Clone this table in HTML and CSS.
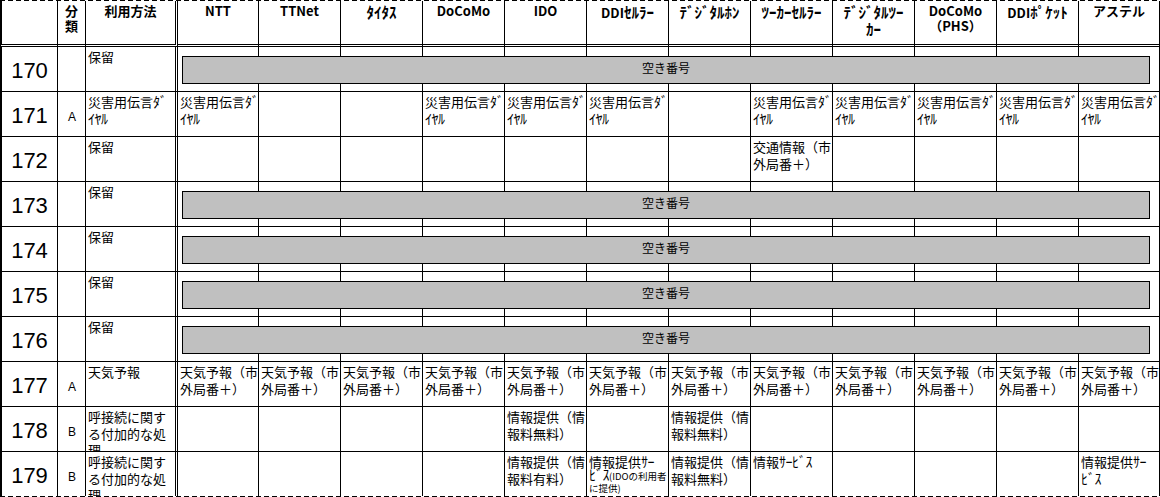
FILE: index.html
```html
<!DOCTYPE html>
<html lang="ja">
<head>
<meta charset="utf-8">
<title>番号利用表</title>
<link rel="stylesheet" href="styles.css">
</head>
<body>
<div class="sheet">
  <div class="row head">
    <div class="c"></div>
    <div class="c">分<br>類</div>
    <div class="c">利用方法</div>
    <div class="c">NTT</div>
    <div class="c">TTNet</div>
    <div class="c"><span class="hw">ﾀｲﾀｽ</span></div>
    <div class="c">DoCoMo</div>
    <div class="c">IDO</div>
    <div class="c">DDI<span class="hw">ｾﾙﾗｰ</span></div>
    <div class="c"><span class="hw">ﾃﾞｼﾞﾀﾙﾎﾝ</span></div>
    <div class="c"><span class="hw">ﾂｰｶｰｾﾙﾗｰ</span></div>
    <div class="c"><span class="hw">ﾃﾞｼﾞﾀﾙﾂｰ</span><br><span class="hw">ｶｰ</span></div>
    <div class="c">DoCoMo<br>（PHS）</div>
    <div class="c">DDI<span class="hw">ﾎﾟｹｯﾄ</span></div>
    <div class="c">アステル</div>
  </div>

  <div class="row">
    <div class="c num">170</div><div class="c cat"></div><div class="c">保留</div>
    <div class="c"></div><div class="c"></div><div class="c"></div><div class="c"></div><div class="c"></div><div class="c"></div>
    <div class="c"></div><div class="c"></div><div class="c"></div><div class="c"></div><div class="c"></div><div class="c"></div>
    <div class="bar">空き番号</div>
  </div>

  <div class="row">
    <div class="c num">171</div><div class="c cat">A</div><div class="c">災害用伝言<span class="hw">ﾀﾞ</span><br><span class="hw">ｲﾔﾙ</span></div>
    <div class="c">災害用伝言<span class="hw">ﾀﾞ</span><br><span class="hw">ｲﾔﾙ</span></div><div class="c"></div><div class="c"></div>
    <div class="c">災害用伝言<span class="hw">ﾀﾞ</span><br><span class="hw">ｲﾔﾙ</span></div><div class="c">災害用伝言<span class="hw">ﾀﾞ</span><br><span class="hw">ｲﾔﾙ</span></div><div class="c">災害用伝言<span class="hw">ﾀﾞ</span><br><span class="hw">ｲﾔﾙ</span></div>
    <div class="c"></div><div class="c">災害用伝言<span class="hw">ﾀﾞ</span><br><span class="hw">ｲﾔﾙ</span></div><div class="c">災害用伝言<span class="hw">ﾀﾞ</span><br><span class="hw">ｲﾔﾙ</span></div>
    <div class="c">災害用伝言<span class="hw">ﾀﾞ</span><br><span class="hw">ｲﾔﾙ</span></div><div class="c">災害用伝言<span class="hw">ﾀﾞ</span><br><span class="hw">ｲﾔﾙ</span></div><div class="c">災害用伝言<span class="hw">ﾀﾞ</span><br><span class="hw">ｲﾔﾙ</span></div>
  </div>

  <div class="row">
    <div class="c num">172</div><div class="c cat"></div><div class="c">保留</div>
    <div class="c"></div><div class="c"></div><div class="c"></div><div class="c"></div><div class="c"></div><div class="c"></div>
    <div class="c"></div><div class="c">交通情報（市<br>外局番＋）</div><div class="c"></div><div class="c"></div><div class="c"></div><div class="c"></div>
  </div>

  <div class="row">
    <div class="c num">173</div><div class="c cat"></div><div class="c">保留</div>
    <div class="c"></div><div class="c"></div><div class="c"></div><div class="c"></div><div class="c"></div><div class="c"></div>
    <div class="c"></div><div class="c"></div><div class="c"></div><div class="c"></div><div class="c"></div><div class="c"></div>
    <div class="bar">空き番号</div>
  </div>

  <div class="row">
    <div class="c num">174</div><div class="c cat"></div><div class="c">保留</div>
    <div class="c"></div><div class="c"></div><div class="c"></div><div class="c"></div><div class="c"></div><div class="c"></div>
    <div class="c"></div><div class="c"></div><div class="c"></div><div class="c"></div><div class="c"></div><div class="c"></div>
    <div class="bar">空き番号</div>
  </div>

  <div class="row">
    <div class="c num">175</div><div class="c cat"></div><div class="c">保留</div>
    <div class="c"></div><div class="c"></div><div class="c"></div><div class="c"></div><div class="c"></div><div class="c"></div>
    <div class="c"></div><div class="c"></div><div class="c"></div><div class="c"></div><div class="c"></div><div class="c"></div>
    <div class="bar">空き番号</div>
  </div>

  <div class="row">
    <div class="c num">176</div><div class="c cat"></div><div class="c">保留</div>
    <div class="c"></div><div class="c"></div><div class="c"></div><div class="c"></div><div class="c"></div><div class="c"></div>
    <div class="c"></div><div class="c"></div><div class="c"></div><div class="c"></div><div class="c"></div><div class="c"></div>
    <div class="bar">空き番号</div>
  </div>

  <div class="row">
    <div class="c num">177</div><div class="c cat">A</div><div class="c">天気予報</div>
    <div class="c">天気予報（市<br>外局番＋）</div><div class="c">天気予報（市<br>外局番＋）</div><div class="c">天気予報（市<br>外局番＋）</div>
    <div class="c">天気予報（市<br>外局番＋）</div><div class="c">天気予報（市<br>外局番＋）</div><div class="c">天気予報（市<br>外局番＋）</div>
    <div class="c">天気予報（市<br>外局番＋）</div><div class="c">天気予報（市<br>外局番＋）</div><div class="c">天気予報（市<br>外局番＋）</div>
    <div class="c">天気予報（市<br>外局番＋）</div><div class="c">天気予報（市<br>外局番＋）</div><div class="c">天気予報（市<br>外局番＋）</div>
  </div>

  <div class="row">
    <div class="c num">178</div><div class="c cat">B</div><div class="c">呼接続に関す<br>る付加的な処<br>理</div>
    <div class="c"></div><div class="c"></div><div class="c"></div><div class="c"></div>
    <div class="c">情報提供（情<br>報料無料）</div><div class="c"></div><div class="c">情報提供（情<br>報料無料）</div>
    <div class="c"></div><div class="c"></div><div class="c"></div><div class="c"></div><div class="c"></div>
  </div>

  <div class="row last">
    <div class="c num">179</div><div class="c cat">B</div><div class="c">呼接続に関す<br>る付加的な処<br>理</div>
    <div class="c"></div><div class="c"></div><div class="c"></div><div class="c"></div>
    <div class="c">情報提供（情<br>報料有料）</div>
    <div class="c mix">情報提供<span class="hw">ｻｰ</span><br><span class="hw">ﾋﾞｽ</span><span class="sm">(IDOの利用者</span><br><span class="sm">に提供)</span></div>
    <div class="c">情報提供（情<br>報料無料）</div>
    <div class="c">情報<span class="hw">ｻｰﾋﾞｽ</span></div><div class="c"></div><div class="c"></div><div class="c"></div>
    <div class="c">情報提供<span class="hw">ｻｰ</span><br><span class="hw">ﾋﾞｽ</span></div>
  </div>
</div>
</body>
</html>
```

FILE: styles.css
```css
html, body {
  margin: 0;
  padding: 0;
  background: #fff;
}

body {
  font-family: "Noto Sans CJK JP", "Noto Sans", sans-serif;
  font-size: 13px;
  color: #000;
}

.sheet {
  width: 1160px;
  padding: 1px 0;
  box-sizing: border-box;
  background:
    repeating-linear-gradient(90deg, #000 0 5px, #fff 5px 8px) top left / 100% 1px no-repeat,
    repeating-linear-gradient(90deg, #000 0 5px, #fff 5px 8px) bottom left / 100% 1px no-repeat,
    #fff;
}

.row {
  display: grid;
  grid-template-columns: 58px 28px 92px 81px repeat(10, 82px) 81px;
  height: 45px;
  position: relative;
}

.row > .c {
  box-sizing: border-box;
  border-right: 1px solid #000;
  border-bottom: 1px solid #000;
  overflow: hidden;
  white-space: nowrap;
  padding: 2px 0 0 2px;
  line-height: 16.7px;
}

.row > .c:first-child {
  border-left: 2px solid #000;
}

.row > .c:nth-child(3) {
  border-right: 3px double #000;
}

.head {
  height: 46px;
}

.head > .c {
  border-bottom: 3px double #000;
  font-weight: bold;
  text-align: center;
  line-height: 14.5px;
  padding: 3px 0 0 0;
}

.hw {
  font-size: 14px;
  letter-spacing: -0.5px;
  line-height: 1;
}

.head .hw {
  font-size: 15px;
  letter-spacing: 0;
}

.row.last {
  height: 44px;
}

.row.last > .c {
  border-bottom: none;
}

.row > .num {
  font-family: "Liberation Sans", Arial, sans-serif;
  font-size: 22px;
  line-height: 25px;
  padding: 11px 0 0 0;
  text-align: center;
}

.row > .cat {
  font-family: "Liberation Sans", Arial, sans-serif;
  font-size: 12px;
  line-height: 14px;
  padding: 18px 0 0 1px;
  text-align: center;
}

.row > .mix {
  line-height: 12.2px;
  padding-top: 3px;
}

.mix .hw {
  line-height: 12px;
}

.mix .sm {
  line-height: 9px;
}

.sm {
  font-size: 9.5px;
}

.bar {
  position: absolute;
  left: 182px;
  top: 9px;
  width: 968px;
  height: 28px;
  box-sizing: border-box;
  border: 1px solid #000;
  background: #c0c0c0;
  text-align: center;
  font-size: 12px;
  line-height: 15px;
  padding-top: 3px;
}
```
